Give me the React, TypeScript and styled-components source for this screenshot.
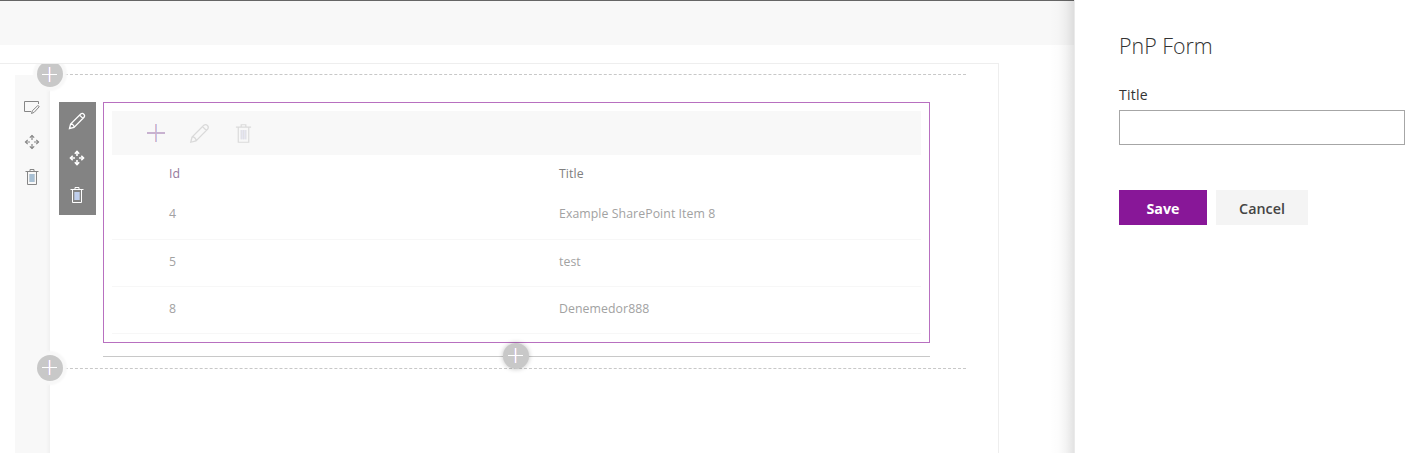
import React from 'react';
import styled, { createGlobalStyle, css } from 'styled-components';

const GlobalStyle = createGlobalStyle`
  *, *::before, *::after { box-sizing: border-box; }
  body { margin: 0; background: #fff; font-family: 'Open Sans', 'Noto Sans', sans-serif; overflow: hidden; }
`;

const Page = styled.div`
  display: flex;
  width: 1422px;
  height: 453px;
  overflow: hidden;
`;

const Main = styled.main`
  width: 1074px;
  flex: none;
  display: flex;
  flex-direction: column;
`;

const CommandBar = styled.header`
  height: 45px;
  flex: none;
  border-top: 1px solid #666;
  background: #f8f8f8;
`;

const Canvas = styled.div`
  width: 999px;
  flex: 1;
  margin-top: 18px;
  padding-left: 15px;
  display: flex;
  overflow: hidden;
  border-top: 1px solid #eee;
  border-right: 1px solid #eee;
`;

const SectionRail = styled.aside`
  width: 35px;
  flex: none;
  margin-top: 11px;
  padding: 23px 2px 0 0;
  display: flex;
  flex-direction: column;
  align-items: center;
  gap: 17px;
  background: linear-gradient(to right, #f8f8f8 31px, #f0f0f0 35px);
  color: #868686;
  svg { display: block; }
`;

const Section = styled.section`
  position: relative;
  width: 916px;
  height: 295px;
  margin-top: 10px;
  border-top: 1px dashed #c8c8c8;
  border-bottom: 1px dashed #c8c8c8;
  padding: 27px 36px 0 9px;
`;

const AddButton = styled.button<{ $x: number; $y: number; $raised?: boolean }>`
  position: absolute;
  left: ${p => p.$x}px;
  top: ${p => p.$y}px;
  width: 26px;
  height: 26px;
  padding: 0;
  border: 0;
  border-radius: 50%;
  background: #c8c8c8;
  box-shadow: ${p => (p.$raised ? '0 0 5px rgba(0,0,0,.25)' : '0 0 2px 4px #f8f8f8')};
  svg { display: block; }
`;

const WebPart = styled.div`
  display: flex;
  align-items: flex-start;
  gap: 7px;
`;

const PartTools = styled.div`
  width: 37px;
  height: 113px;
  padding: 10px 2px 0 0;
  display: flex;
  flex-direction: column;
  align-items: center;
  gap: 19px;
  background: #838383;
  color: #fff;
  svg { display: block; }
`;

const PartFrame = styled.div`
  width: 827px;
  padding: 8px;
  border: 1px solid #b870c0;
`;

const ListBar = styled.div`
  height: 44px;
  padding-left: 34px;
  display: flex;
  align-items: center;
  gap: 23px;
  background: #f8f8f8;
  color: #dadada;
  svg { display: block; }
`;

const Row = styled.div<{ $height: number; $header?: boolean }>`
  height: ${p => p.$height}px;
  padding: 0 0 4px 57px;
  display: grid;
  grid-template-columns: 390px 1fr;
  align-items: center;
  font-size: 12.3px;
  letter-spacing: 0.07px;
  color: #a2a2a2;
  border-bottom: 1px solid #f7f7f7;
  ${p => p.$header && css`
    padding-bottom: 0;
    color: #808080;
    border-bottom-color: transparent;
  `}
`;

const HeaderCell = styled.span<{ $sorted?: boolean }>`
  color: ${p => (p.$sorted ? '#94799c' : 'inherit')};
  letter-spacing: 0.1px;
`;

const DropLine = styled.div`
  width: 827px;
  height: 1px;
  margin: 13px 0 0 44px;
  background: #c8c8c8;
`;

const Panel = styled.aside`
  position: relative;
  width: 348px;
  flex: none;
  padding: 32px 17px 0 44px;
  border-left: 1px solid #eaeaea;
  background: #fff;

  &::before {
    content: '';
    position: absolute;
    top: 0;
    bottom: 0;
    left: -25px;
    width: 24px;
    background: linear-gradient(
      to right,
      rgba(0, 0, 0, 0),
      rgba(0, 0, 0, 0.012) 35%,
      rgba(0, 0, 0, 0.045) 65%,
      rgba(0, 0, 0, 0.11)
    );
  }
`;

const PanelTitle = styled.h1`
  margin: 0;
  font-size: 21.4px;
  line-height: 28px;
  font-weight: 300;
  color: #333;
`;

const FieldLabel = styled.label`
  display: block;
  margin-top: 24px;
  font-size: 14px;
  line-height: 21px;
  letter-spacing: 0.25px;
  color: #333;
`;

const TextInput = styled.input`
  display: block;
  width: 286px;
  height: 35px;
  margin-top: 5px;
  border: 1px solid #a6a6a6;
  border-radius: 0;
  background: #fff;
`;

const Actions = styled.div`
  display: flex;
  gap: 9px;
  margin-top: 45px;
`;

const ActionButton = styled.button<{ $primary?: boolean }>`
  width: ${p => (p.$primary ? 88 : 92)}px;
  height: 35px;
  padding: 2px 0 0;
  border: 0;
  font-family: inherit;
  font-size: 14.3px;
  font-weight: ${p => (p.$primary ? 700 : 600)};
  color: ${p => (p.$primary ? '#fff' : '#444')};
  background: ${p => (p.$primary ? '#881798' : '#f4f4f4')};
`;

const PlusGlyph = ({ row = 13 }: { row?: number }) => (
  <svg width="26" height="26" viewBox="0 0 26 26">
    <rect x="11" y={row - 7} width="1" height="15" fill="#cfccec" />
    <rect x="12" y={row - 7} width="1" height="15" fill="#fff" />
    <rect x="13" y={row - 7} width="1" height="15" fill="#e6d3d3" />
    <rect x="5" y={row} width="15" height="1" fill="#fff" />
  </svg>
);

const EditSectionIcon = () => (
  <svg width="18" height="18" viewBox="0 0 18 18" fill="none" stroke="currentColor">
    <path d="M8 13.500H1.500V3.500H15.500V6" />
    <path d="M8.500 15.500L9.300 12.800L14.500 7.800Q15.800 7.300 16.200 8.800L11.200 14.300Z" />
  </svg>
);

const MoveIcon = ({ weight = 1.2 }: { weight?: number }) => (
  <svg width="18" height="18" viewBox="0 0 18 18" fill="none" stroke="currentColor" strokeWidth={weight}>
    <path d="M9 2.500V7M9 11V15.500M2.500 9H7M11 9H15.500" />
    <path d="M6.800 4.700L9 2.500L11.200 4.700M6.800 13.300L9 15.500L11.200 13.300M4.700 6.800L2.500 9L4.700 11.200M13.300 6.800L15.500 9L13.300 11.200" />
  </svg>
);

const TrashIcon = ({ size = 18, inner }: { size?: number; inner: string }) => (
  <svg width={size} height={size} viewBox="0 0 18 18" fill="none" stroke="currentColor">
    <rect x="6.500" y="6" width="5" height="8" fill={inner} stroke="none" />
    <path d="M2.500 3.500H15.500M7 3V1.500H11V3" />
    <path d="M4.500 3.500V16.500H13.500V3.500" />
    <path d="M7 6V14M9 6V14M11 6V14" strokeWidth="0.5" />
  </svg>
);

const PencilIcon = ({ size = 18, weight = 1 }: { size?: number; weight?: number }) => (
  <svg width={size} height={size} viewBox="0 0 18 18" fill="none" stroke="currentColor" strokeWidth={weight}>
    <path d="M1.500 16.500L2.600 12L12.700 2C15 .4 17.600 3 16 5.300L6 15.400ZM2.600 12C4.500 11.800 6.200 13.500 6 15.400M11.600 3.100L14.900 6.400" />
  </svg>
);

const NewItemIcon = () => (
  <svg width="20" height="20" viewBox="0 0 20 20">
    <rect x="9" y="1" width="1" height="18" fill="#e3b9c6" />
    <rect x="10" y="1" width="1" height="18" fill="#bfc5ec" />
    <rect x="1" y="9" width="18" height="2" fill="#c8b2d0" />
  </svg>
);

const items = [
  { id: 4, title: 'Example SharePoint Item 8', height: 48 },
  { id: 5, title: 'test', height: 47 },
  { id: 8, title: 'Denemedor888', height: 47 },
];

export default function App() {
  return (
    <>
      <GlobalStyle />
      <Page>
        <Main>
          <CommandBar />
          <Canvas>
            <SectionRail>
              <EditSectionIcon />
              <MoveIcon />
              <TrashIcon inner="#b4d4ee" />
            </SectionRail>
            <Section>
              <WebPart>
                <PartTools>
                  <PencilIcon size={18} weight={1.3} />
                  <MoveIcon weight={1.6} />
                  <TrashIcon inner="#a9bfe8" />
                </PartTools>
                <PartFrame>
                  <ListBar>
                    <NewItemIcon />
                    <PencilIcon size={21} weight={1.1} />
                    <TrashIcon size={21} inner="#e6e6f1" />
                  </ListBar>
                  <Row $height={37} $header>
                    <HeaderCell $sorted>Id</HeaderCell>
                    <HeaderCell>Title</HeaderCell>
                  </Row>
                  {items.map(item => (
                    <Row key={item.id} $height={item.height}>
                      <span>{item.id}</span>
                      <span>{item.title}</span>
                    </Row>
                  ))}
                </PartFrame>
              </WebPart>
              <DropLine />
              <AddButton $x={-13} $y={-14} aria-label="Add section above"><PlusGlyph /></AddButton>
              <AddButton $x={-13} $y={280} aria-label="Add section below"><PlusGlyph row={12} /></AddButton>
              <AddButton $x={453} $y={268} $raised aria-label="Add web part"><PlusGlyph row={12} /></AddButton>
            </Section>
          </Canvas>
        </Main>
        <Panel>
          <PanelTitle>PnP Form</PanelTitle>
          <FieldLabel htmlFor="title">Title</FieldLabel>
          <TextInput id="title" />
          <Actions>
            <ActionButton $primary>Save</ActionButton>
            <ActionButton>Cancel</ActionButton>
          </Actions>
        </Panel>
      </Page>
    </>
  );
}
